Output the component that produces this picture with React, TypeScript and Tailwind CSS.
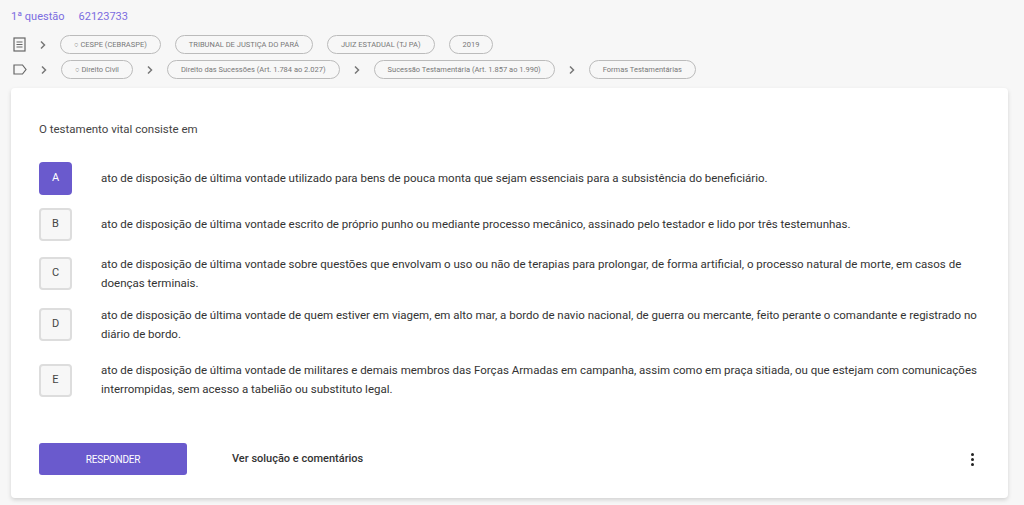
import React from "react";

const Chev = () => (
  <svg width="10" height="10" viewBox="0 0 10 10" className="mx-[12px] shrink-0"><path d="M3 1.5 6.5 5 3 8.5" fill="none" stroke="#777" strokeWidth="1.5" /></svg>
);
const Chip = ({ t, c = "" }: { t: string; c?: string }) => (
  <span className={`h-[19px] flex items-center rounded-full border border-[#bbb] text-[7.5px] text-[#777] px-[13px] whitespace-nowrap ${c}`}>{t}</span>
);

const opts = [
  ["A", "ato de disposição de última vontade utilizado para bens de pouca monta que sejam essenciais para a subsistência do beneficiário."],
  ["B", "ato de disposição de última vontade escrito de próprio punho ou mediante processo mecânico, assinado pelo testador e lido por três testemunhas."],
  ["C", "ato de disposição de última vontade sobre questões que envolvam o uso ou não de terapias para prolongar, de forma artificial, o processo natural de morte, em casos de doenças terminais."],
  ["D", "ato de disposição de última vontade de quem estiver em viagem, em alto mar, a bordo de navio nacional, de guerra ou mercante, feito perante o comandante e registrado no diário de bordo."],
  ["E", "ato de disposição de última vontade de militares e demais membros das Forças Armadas em campanha, assim como em praça sitiada, ou que estejam com comunicações interrompidas, sem acesso a tabelião ou substituto legal."],
];

export default function App() {
  return (
    <div className="w-[1024px] h-[505px] overflow-hidden bg-[#f7f7f7] font-[Roboto] text-[#333]">
      <div className="pl-[11px] pt-[9px] h-[16px] text-[11px] text-[#7b6ce0] flex gap-[14px] leading-[16px]">
        <span>1ª questão</span><span>62123733</span>
      </div>
      <div className="flex items-center pl-[13px] mt-[19px] h-[19px]">
        <svg width="13" height="15" viewBox="0 0 13 15"><rect x="1" y="1" width="11" height="13" fill="none" stroke="#666" strokeWidth="1.2"/><path d="M3.5 5h6M3.5 7.5h6M3.5 10h6" stroke="#666" strokeWidth="1.1"/></svg>
        <Chev />
        <div className="flex gap-[14px]">
          <Chip t="○ CESPE (CEBRASPE)" />
          <Chip t="TRIBUNAL DE JUSTIÇA DO PARÁ" />
          <Chip t="JUIZ ESTADUAL (TJ PA)" />
          <Chip t="2019" />
        </div>
      </div>
      <div className="flex items-center pl-[13px] mt-[6px] h-[19px]">
        <svg width="14" height="11" viewBox="0 0 14 11"><path d="M1 1h8.5l3.5 4.5-3.5 4.5H1z" fill="none" stroke="#666" strokeWidth="1.2"/></svg>
        <Chev />
        <Chip t="○ Direito Civil" />
        <Chev />
        <Chip t="Direito das Sucessões (Art. 1.784 ao 2.027)" />
        <Chev />
        <Chip t="Sucessão Testamentária (Art. 1.857 ao 1.990)" />
        <Chev />
        <Chip t="Formas Testamentárias" />
      </div>
      <div className="mx-[11px] mt-[9px] w-[997px] h-[410px] bg-white rounded-[4px] shadow-[0_2px_4px_rgba(0,0,0,0.15)] pl-[28px] pr-[30px] pt-[33px]">
        <div className="text-[11.5px] leading-[16px] text-[#444]">O testamento vital consiste em</div>
        <div className="mt-[25px] flex flex-col">
          {opts.map(([l, t], i) => (
            <div key={l} className={`flex items-center ${i === 0 ? "h-[33px] mb-[13px]" : i === 1 ? "h-[33px] mb-[14px]" : i === 4 ? "h-[46px]" : "h-[37px] mb-[14px]"}`}>
              <div className={`w-[33px] h-[33px] shrink-0 rounded-[4px] flex items-center justify-center text-[11px] ${i === 0 ? "bg-[#6a5acd] text-white" : "bg-[#f7f7f7] border-2 border-[#ddd] text-[#444]"}`}>{l}</div>
              <div className="ml-[29px] text-[11.5px] leading-[19px] text-[#333]">{t}</div>
            </div>
          ))}
        </div>
        <div className="mt-[40px] flex items-center">
          <button className="w-[148px] h-[32px] bg-[#6a5acd] rounded-[3px] text-white text-[10px] tracking-tight">RESPONDER</button>
          <span className="ml-[45px] text-[11px] font-medium text-[#333]">Ver solução e comentários</span>
          <span className="ml-auto mr-[4px] flex flex-col gap-[2px]">
            <i className="w-[3px] h-[3px] rounded-full bg-[#222]" /><i className="w-[3px] h-[3px] rounded-full bg-[#222]" /><i className="w-[3px] h-[3px] rounded-full bg-[#222]" />
          </span>
        </div>
      </div>
    </div>
  );
}
